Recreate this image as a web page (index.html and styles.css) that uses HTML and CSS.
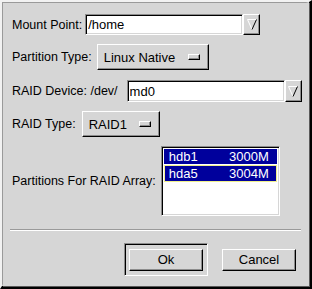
FILE: index.html
```html
<html>
<head>
<title>RAID Device</title>
<link rel="stylesheet" href="styles.css">
</head>
<body>
<div class="window">
  <div class="frame">
    <div class="row row-mount">
      <label>Mount Point:</label>
      <div class="combo">
        <input type="text" class="entry" value="/home">
        <button class="arrow"><svg width="10" height="11" viewBox="0 0 10 11"><polyline points="0.5,0.5 9.5,0.5" stroke="#ffffff" fill="none"/><polyline points="0.5,0.5 5,10.5" stroke="#ffffff" fill="none"/><polyline points="5,10.5 9.5,0.5" stroke="#000000" fill="none"/></svg></button>
      </div>
    </div>

    <div class="row row-type">
      <label>Partition Type:</label>
      <button class="option wide">Linux Native<span class="indicator"></span></button>
    </div>

    <div class="row row-device">
      <label>RAID Device: /dev/</label>
      <div class="combo">
        <input type="text" class="entry" value="md0">
        <button class="arrow tall"><svg width="10" height="11" viewBox="0 0 10 11"><polyline points="0.5,0.5 9.5,0.5" stroke="#ffffff" fill="none"/><polyline points="0.5,0.5 5,10.5" stroke="#ffffff" fill="none"/><polyline points="5,10.5 9.5,0.5" stroke="#000000" fill="none"/></svg></button>
      </div>
    </div>

    <div class="row row-raid">
      <label>RAID Type:</label>
      <button class="option narrow">RAID1<span class="indicator"></span></button>
    </div>

    <div class="row row-parts">
      <label>Partitions For RAID Array:</label>
      <div class="list">
        <div class="item selected"><span>hdb1</span><span>3000M</span></div>
        <div class="item selected focus"><span>hda5</span><span>3004M</span></div>
      </div>
    </div>

    <div class="separator"></div>

    <div class="actions">
      <div class="default-frame"><button class="push">Ok</button></div>
      <button class="push">Cancel</button>
    </div>
  </div>
</div>
</body>
</html>
```

FILE: styles.css
```css
body {
  margin: 0;
  font-family: "Liberation Sans", Arial, sans-serif;
  font-size: 13px;
  color: #000;
  background: #d6d6d6;
}
.window {
  width: 312px;
  height: 289px;
  box-sizing: border-box;
  background: #d6d6d6;
  border-style: solid;
  border-width: 2px 3px 3px 2px;
  border-color: #f2f2f2 #000 #000 #f2f2f2;
}
.frame {
  height: 100%;
  box-sizing: border-box;
  border-style: solid;
  border-width: 1px 3px 2px 1px;
  border-color: #9a9a9a #d6d6d6 #d6d6d6 #9a9a9a;
  box-shadow: 1px 1px 0 #5a5a5a;
  padding: 11px 0 0 9px;
}
.row {
  display: flex;
  align-items: center;
}
.row label {
  font-size: 12.5px;
}
.row-mount label { margin-right: 3px; }
.row-type { margin-top: 9px; }
.row-type label { margin-right: 5px; }
.row-device { margin-top: 10px; }
.row-device label { margin-right: 9px; }
.row-raid { margin-top: 9px; }
.row-raid label { margin-right: 6px; }
.row-parts { margin-top: 9px; }
.row-parts label { margin-right: 5px; }

.combo {
  display: flex;
}
.entry {
  width: 158px;
  height: 21px;
  box-sizing: border-box;
  margin: 0;
  padding: 0 0 0 2px;
  font-family: inherit;
  font-size: 13px;
  background: #fff;
  border-style: solid;
  border-width: 1px;
  border-color: #8c8c8c #fff #fff #8c8c8c;
  box-shadow: inset 1px 1px 0 #000, inset -1px -1px 0 #d6d6d6;
  outline: none;
}
.row-device .entry { height: 22px; }
.arrow {
  width: 17px;
  height: 21px;
  margin: 0;
  padding: 0;
  background: #d6d6d6;
  border-style: solid;
  border-width: 1px;
  border-color: #fff #000 #000 #fff;
  box-shadow: inset -1px -1px 0 #8c8c8c;
  display: flex;
  align-items: center;
  justify-content: center;
}
.arrow.tall { height: 22px; }

.option {
  height: 26px;
  box-sizing: border-box;
  margin: 0;
  padding: 0 8px 0 6px;
  font-family: inherit;
  font-size: 13px;
  background: #d6d6d6;
  border-style: solid;
  border-width: 1px;
  border-color: #fff #000 #000 #fff;
  box-shadow: inset -1px -1px 0 #8c8c8c;
  display: flex;
  align-items: center;
  justify-content: space-between;
  text-align: left;
}
.option.wide { width: 112px; }
.option.narrow { width: 78px; }
.indicator {
  width: 12px;
  height: 6px;
  box-sizing: border-box;
  border-style: solid;
  border-width: 1px;
  border-color: #fff #000 #000 #fff;
  box-shadow: inset -1px -1px 0 #8c8c8c;
}

.list {
  width: 119px;
  height: 70px;
  box-sizing: border-box;
  background: #fff;
  border-style: solid;
  border-width: 1px;
  border-color: #8c8c8c #fff #fff #8c8c8c;
  box-shadow: inset 1px 1px 0 #000, inset -1px -1px 0 #d6d6d6;
  padding: 2px 2px 0 2px;
}
.item {
  height: 15px;
  box-sizing: border-box;
  display: flex;
  justify-content: space-between;
  align-items: center;
  padding: 0 8px 0 5px;
  font-size: 13px;
  margin-bottom: 1px;
}
.item.selected {
  background: #00009c;
  color: #fff;
}
.item.focus {
  height: 17px;
  border: 1px solid #f0f08c;
  padding: 0 7px 0 4px;
}

.separator {
  margin: 13px 5px 0 -2px;
  height: 0;
  border-top: 1px solid #9a9a9a;
  border-bottom: 1px solid #fff;
}

.actions {
  display: flex;
  align-items: center;
  margin-top: 12px;
  padding-left: 112px;
}
.default-frame {
  width: 84px;
  height: 33px;
  box-sizing: border-box;
  border-style: solid;
  border-width: 1px;
  border-color: #8c8c8c #fff #fff #8c8c8c;
  box-shadow: inset 1px 1px 0 #000;
  display: flex;
  align-items: center;
  justify-content: center;
  margin-right: 14px;
}
.push {
  width: 74px;
  height: 22px;
  box-sizing: border-box;
  margin: 0;
  padding: 0;
  font-family: inherit;
  font-size: 13px;
  background: #d6d6d6;
  border-style: solid;
  border-width: 1px;
  border-color: #fff #000 #000 #fff;
  box-shadow: inset -1px -1px 0 #8c8c8c;
}
```
